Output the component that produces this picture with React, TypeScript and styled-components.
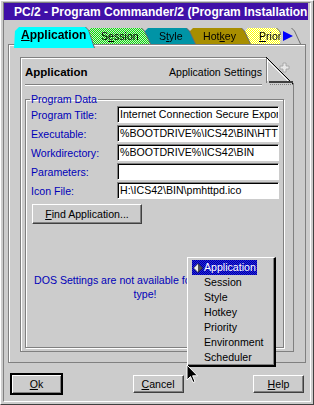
import React from 'react';
import styled, { createGlobalStyle, css } from 'styled-components';

const GlobalStyle = createGlobalStyle`
  html, body {
    margin: 0;
    padding: 0;
    background: #cccccc;
  }
  body {
    font-family: "Liberation Sans", Arial, sans-serif;
    font-size: 10.6px;
    color: #000;
  }
`;

const dither = (a: string, b: string) =>
  `repeating-conic-gradient(${a} 0 25%, ${b} 0 50%)`;

// Window frame
const Window = styled.div`
  position: relative;
  width: 314px;
  height: 405px;
  box-sizing: border-box;
  background: #cccccc;
  border: 1px solid;
  border-color: #ffffff #404040 #404040 #ffffff;
  overflow: hidden;
`;

const Frame = styled.div`
  height: 400px;
  margin: 1px 2px 2px;
  box-sizing: border-box;
  border: 1px solid;
  border-color: #808080 #ffffff #ffffff #808080;
  display: flex;
  flex-direction: column;
`;

const TitleBar = styled.div`
  height: 17px;
  margin-right: 2px;
  padding-left: 10px;
  background: #4010a8;
  color: #ffffff;
  font-weight: bold;
  font-size: 12px;
  line-height: 19px;
  white-space: nowrap;
  overflow: hidden;
`;

// Notebook
const Notebook = styled.div`
  margin: 4px 4px 0;
  display: flex;
  flex-direction: column;
`;

const TabRow = styled.div`
  position: relative;
  z-index: 2;
  height: 20px;
  display: flex;
  align-items: flex-end;
  padding-left: 6px;
`;

const TabEdge = styled.div<{ $z: number; $overlap: number; $active?: boolean }>`
  position: relative;
  z-index: ${p => p.$z};
  margin-left: ${p => -p.$overlap}px;
  margin-bottom: ${p => (p.$active ? -4 : 0)}px;
  filter: drop-shadow(1px 0 0 #6c6c6c);
`;

const TabFace = styled.div<{ $w: number; $bg: string; $pad: number; $active?: boolean }>`
  width: ${p => p.$w}px;
  height: ${p => (p.$active ? 21 : 16)}px;
  box-sizing: border-box;
  padding-left: ${p => p.$pad}px;
  background: ${p => p.$bg};
  background-size: 2px 2px;
  clip-path: polygon(0 100%, 1px 4px, 5px 0, calc(100% - 9px) 0, calc(100% - 6px) 3px, 100% 100%);
  white-space: nowrap;
  overflow: hidden;
  line-height: 16px;
  ${p =>
    p.$active &&
    css`
      font-weight: bold;
      font-size: 12px;
      line-height: 17px;
    `}
`;

const Mnemonic = styled.span`
  text-decoration: underline;
  text-underline-offset: 1px;
`;

const NotebookBody = styled.div`
  position: relative;
  z-index: 1;
  height: 319px;
  box-sizing: border-box;
  border: 1px solid #808080;
  box-shadow: inset 1px 1px 0 #ffffff;
  padding: 12px 11px 10px;
`;

const Page = styled.div`
  position: relative;
  height: 100%;
  box-sizing: border-box;
  border: 1px solid #808080;
  box-shadow: inset 1px 1px 0 #ffffff;
  padding: 0 9px 3px 4px;
  display: flex;
  flex-direction: column;
`;

const DogEar = styled.div`
  position: absolute;
  top: -1px;
  right: -1px;
  width: 28px;
  height: 28px;
  background: #cccccc;

  svg {
    display: block;
  }
`;

const PageHeader = styled.div`
  display: flex;
  justify-content: space-between;
  align-items: baseline;
  margin: 7px 22px 0 0;
  line-height: 14px;
`;

const PageTitle = styled.span`
  font-weight: bold;
  font-size: 11.5px;
`;

const HeaderRule = styled.div`
  margin: 5px 22px 0 0;
  border-top: 1px solid #808080;
  border-bottom: 1px solid #ffffff;
`;

const GroupBox = styled.fieldset`
  flex: 1;
  min-width: 0;
  margin: 7px 0 0;
  padding: 1px 4px 0 4px;
  border: 1px solid #808080;
  box-shadow: inset 1px 1px 0 #ffffff, 1px 1px 0 #ffffff;
`;

const GroupLabel = styled.legend`
  padding: 0 1px;
  color: #0000b8;
  line-height: 12px;
`;

const FieldRow = styled.div`
  display: flex;
  align-items: center;
  height: 17px;
  margin-bottom: 2px;
`;

const FieldLabel = styled.span`
  width: 86px;
  margin-left: 1px;
  color: #0000b8;
  white-space: nowrap;
`;

const EntryField = styled.div`
  flex: 1;
  height: 17px;
  box-sizing: border-box;
  border: 1px solid;
  border-color: #808080 #ffffff #ffffff #808080;
  box-shadow: inset 1px 1px 0 #000000;
  background: #ffffff;
  padding-left: 2px;
  line-height: 15px;
  white-space: nowrap;
  overflow: hidden;
`;

const PushButton = styled.div<{ $w: number; $default?: boolean }>`
  width: ${p => p.$w}px;
  height: 18px;
  box-sizing: border-box;
  display: flex;
  align-items: center;
  justify-content: center;
  background: #cccccc;
  border: 1px solid;
  border-color: #ffffff #404040 #404040 #ffffff;
  box-shadow: inset -1px -1px 0 #808080;
  white-space: nowrap;
  ${p =>
    p.$default &&
    css`
      width: ${p.$w + 2}px;
      height: 22px;
      border: 2px solid #000000;
      box-shadow: inset 1px 1px 0 #ffffff, inset -1px -1px 0 #808080;
    `}
`;

const FindButton = styled(PushButton)`
  height: 20px;
  margin: 5px 0 0 2px;
`;

const Notice = styled.div`
  width: 224px;
  margin: 49px 0 0 3px;
  color: #0000b8;
  text-align: center;
  line-height: 14px;
`;

const ButtonRow = styled.div`
  display: flex;
  justify-content: space-between;
  align-items: center;
  height: 22px;
  margin-top: 10px;
  padding: 0 6px;
`;

// Context menu over the page
const PopupMenu = styled.div`
  position: absolute;
  left: 186px;
  top: 256px;
  z-index: 5;
  width: 89px;
  height: 110px;
  box-sizing: border-box;
  background: #cccccc;
  border-style: solid;
  border-width: 1px 2px 2px 1px;
  border-color: #ffffff #000000 #000000 #ffffff;
  box-shadow: inset -1px -1px 0 #808080;
  padding: 2px 0 0 4px;
`;

const MenuItem = styled.div<{ $selected?: boolean }>`
  height: 15px;
  line-height: 15px;
  padding-left: 12px;
  white-space: nowrap;
  ${p =>
    p.$selected &&
    css`
      display: inline-flex;
      align-items: center;
      gap: 1px;
      padding: 0 1px 0 1px;
      color: #ffffff;
      background: ${dither('#2424e0', '#0000a0')};
      background-size: 2px 2px;
    `}
`;

const Cursor = styled.svg`
  position: absolute;
  left: 185px;
  top: 363px;
  z-index: 6;
`;

const tabs = [
  { label: 'Session', key: 1, w: 64, overlap: 8, pad: 15, bg: dither('#00f000', '#d4d4d4') },
  { label: 'Style', key: 1, w: 52, overlap: 7, pad: 16, bg: '#0094a6' },
  { label: 'Hotkey', key: 3, w: 62, overlap: 7, pad: 15, bg: '#a88e00' },
  { label: 'Priority', key: 0, w: 42, overlap: 7, pad: 16, bg: dither('#ffff00', '#ffffff') },
];

const menuItems = ['Session', 'Style', 'Hotkey', 'Priority', 'Environment', 'Scheduler'];

const fields = [
  { label: 'Program Title:', value: 'Internet Connection Secure Export Server' },
  { label: 'Executable:', value: '%BOOTDRIVE%\\ICS42\\BIN\\HTTPD.EXE' },
  { label: 'Workdirectory:', value: '%BOOTDRIVE%\\ICS42\\BIN' },
  { label: 'Parameters:', value: '' },
  { label: 'Icon File:', value: 'H:\\ICS42\\BIN\\pmhttpd.ico' },
];

function withMnemonic(text: string, index: number) {
  return (
    <>
      {text.slice(0, index)}
      <Mnemonic>{text[index]}</Mnemonic>
      {text.slice(index + 1)}
    </>
  );
}

function App() {
  return (
    <Window>
      <GlobalStyle />
      <Frame>
        <TitleBar>PC/2 - Program Commander/2 (Program Installation</TitleBar>

        <Notebook>
          <TabRow>
            <TabEdge $z={10} $overlap={0} $active>
              <TabFace $w={80} $pad={7} $bg="#00ffff" $active>
                {withMnemonic('Application', 0)}
              </TabFace>
            </TabEdge>
            {tabs.map((t, i) => (
              <TabEdge key={t.label} $z={9 - i} $overlap={t.overlap}>
                <TabFace $w={t.w} $pad={t.pad} $bg={t.bg}>
                  {withMnemonic(t.label, t.key)}
                </TabFace>
              </TabEdge>
            ))}
            <TabEdge $z={8} $overlap={5}>
              <TabFace $w={20} $pad={3} $bg="#cccccc">
                <svg width="10" height="16" viewBox="0 0 10 16">
                  <polygon points="0,3 10,8 0,13" fill="#0000ff" />
                </svg>
              </TabFace>
            </TabEdge>
          </TabRow>

          <NotebookBody>
            <Page>
              <DogEar>
                <svg width="28" height="28" viewBox="0 0 28 28">
                  <line x1="0.5" y1="0" x2="0.5" y2="26" stroke="#808080" />
                  <line x1="1.5" y1="2" x2="1.5" y2="24" stroke="#ffffff" />
                  <line x1="0" y1="0" x2="27" y2="27" stroke="#000000" />
                  <line x1="1" y1="3" x2="23" y2="25" stroke="#ffffff" />
                  <rect x="3" y="24" width="24" height="2" fill="#404040" />
                  <line x1="4" y1="27.5" x2="27" y2="27.5" stroke="#808080" strokeDasharray="1 1" />
                  <line x1="27.5" y1="26" x2="27.5" y2="28" stroke="#808080" />
                  <path d="M17 6h3v3h3v3h-3v3h-3v-3h-3v-3h3z" fill="#e8e8e8" stroke="#a0a0a0" strokeWidth="0.8" />
                </svg>
              </DogEar>

              <PageHeader>
                <PageTitle>Application</PageTitle>
                <span>Application Settings</span>
              </PageHeader>
              <HeaderRule />

              <GroupBox>
                <GroupLabel>Program Data</GroupLabel>
                {fields.map(f => (
                  <FieldRow key={f.label}>
                    <FieldLabel>{f.label}</FieldLabel>
                    <EntryField>{f.value}</EntryField>
                  </FieldRow>
                ))}
                <FindButton $w={110}>{withMnemonic('Find Application...', 0)}</FindButton>
                <Notice>DOS Settings are not available for this program type!</Notice>
              </GroupBox>
            </Page>
          </NotebookBody>
        </Notebook>

        <ButtonRow>
          <PushButton $w={51} $default>{withMnemonic('Ok', 0)}</PushButton>
          <PushButton $w={51}>{withMnemonic('Cancel', 0)}</PushButton>
          <PushButton $w={51}>{withMnemonic('Help', 0)}</PushButton>
        </ButtonRow>
      </Frame>

      <PopupMenu>
        <MenuItem $selected>
          <svg width="10" height="10" viewBox="0 0 10 10">
            <polygon points="5,0.5 0.5,5 5,9.5" fill="#f0f0f0" />
            <polygon points="5,0.5 9.5,5 5,9.5" fill="#505050" />
            <polygon points="5,0.5 9.5,5 5,9.5 0.5,5" fill="none" stroke="#202020" strokeWidth="0.6" />
          </svg>
          Application
        </MenuItem>
        {menuItems.map(m => (
          <MenuItem key={m}>{m}</MenuItem>
        ))}
      </PopupMenu>

      <Cursor width="13" height="21" viewBox="0 0 13 21">
        <path
          d="M1 1 L1 16 L4.5 12.5 L7 18.5 L9 17.6 L6.6 11.8 L11.5 11.8 Z"
          fill="#000000"
          stroke="#ffffff"
          strokeWidth="1"
        />
      </Cursor>
    </Window>
  );
}

export default App;
